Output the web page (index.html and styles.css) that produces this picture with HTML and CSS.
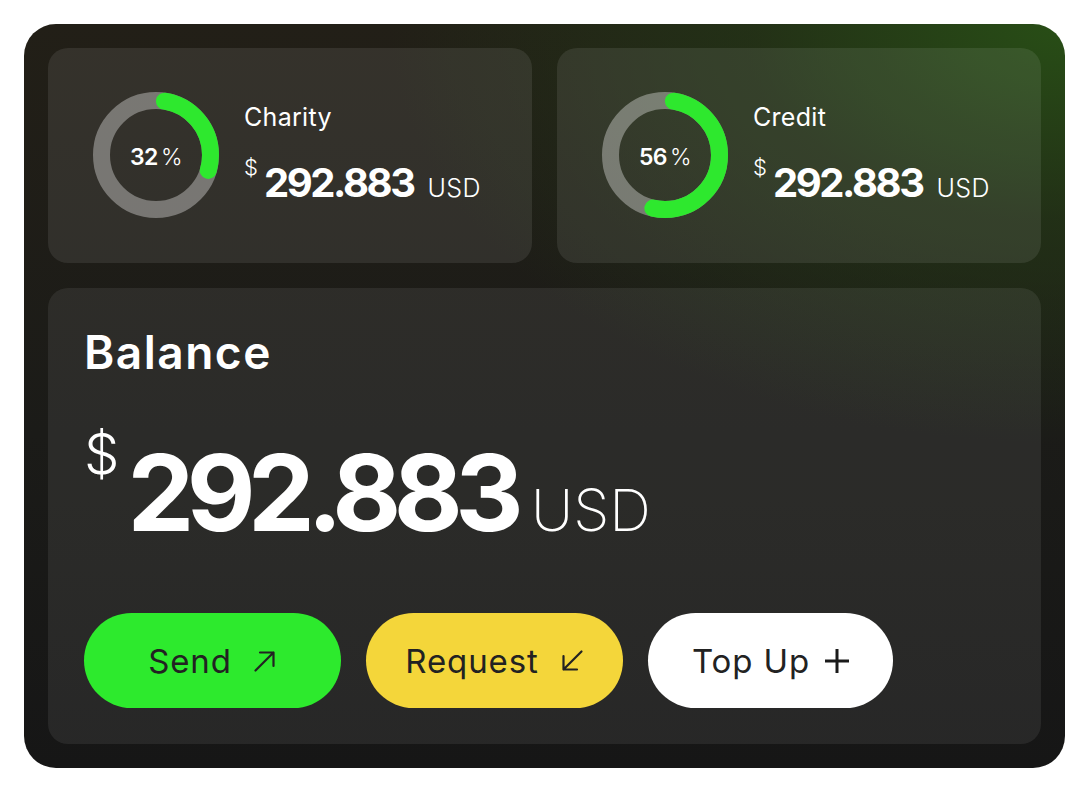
FILE: index.html
```html
<!DOCTYPE html>
<html>
<head>
<meta charset="utf-8">
<link rel="stylesheet" href="styles.css">
</head>
<body>
<div class="wallet">
  <div class="stats">
    <div class="stat">
      <div class="donut">
        <svg width="126" height="126" viewBox="0 0 126 126">
          <circle cx="63" cy="63" r="54.5" class="ring-bg"/>
          <circle cx="63" cy="63" r="54.5" class="ring-fg" stroke-dasharray="92.6 400" stroke-dashoffset="-8.5" transform="rotate(-90 63 63)"/>
        </svg>
        <div class="pct"><b>32</b><span>%</span></div>
      </div>
      <div class="stat-info">
        <div class="stat-label">Charity</div>
        <div class="stat-amount"><span class="cur">$</span><span class="num">292.883</span><span class="usd">USD</span></div>
      </div>
    </div>
    <div class="stat">
      <div class="donut">
        <svg width="126" height="126" viewBox="0 0 126 126">
          <circle cx="63" cy="63" r="54.5" class="ring-bg"/>
          <circle cx="63" cy="63" r="54.5" class="ring-fg" stroke-dasharray="174.7 400" stroke-dashoffset="-8.5" transform="rotate(-90 63 63)"/>
        </svg>
        <div class="pct"><b>56</b><span>%</span></div>
      </div>
      <div class="stat-info">
        <div class="stat-label">Credit</div>
        <div class="stat-amount"><span class="cur">$</span><span class="num">292.883</span><span class="usd">USD</span></div>
      </div>
    </div>
  </div>
  <div class="balance">
    <div class="balance-title">Balance</div>
    <div class="balance-amount"><span class="cur">$</span><span class="num">292.883</span><span class="usd">USD</span></div>
    <div class="actions">
      <button class="btn btn-send"><span>Send</span>
        <svg width="24" height="24" viewBox="0 0 24 24"><path d="M2.5 21.5 L20.5 3.5 M7 3.5 H20.5 V17" fill="none" stroke="#222" stroke-width="2.2" stroke-linecap="round" stroke-linejoin="round"/></svg>
      </button>
      <button class="btn btn-request"><span>Request</span>
        <svg width="24" height="24" viewBox="0 0 24 24"><path d="M21.5 2.5 L3.5 20.5 M3.5 7 V20.5 H17" fill="none" stroke="#222" stroke-width="2.2" stroke-linecap="round" stroke-linejoin="round"/></svg>
      </button>
      <button class="btn btn-top"><span>Top Up</span>
        <svg width="24" height="24" viewBox="0 0 24 24"><path d="M12 0 V24 M0 12 H24" fill="none" stroke="#1a1a1a" stroke-width="3"/></svg>
      </button>
    </div>
  </div>
</div>
</body>
</html>
```

FILE: styles.css
```css
* { box-sizing: border-box; }
html, body { margin: 0; padding: 0; background: #ffffff; }
body {
  font-family: "Inter", "Noto Sans", sans-serif;
  color: #ffffff;
  padding: 24px;
}
.wallet {
  width: 1041px;
  height: 744px;
  border-radius: 32px;
  padding: 24px;
  display: flex;
  flex-direction: column;
  gap: 25px;
  background:
    radial-gradient(ellipse 900px 560px at 100% 0%, rgba(40, 78, 22, 1) 0%, rgba(36, 60, 22, 0.6) 35%, rgba(30, 30, 24, 0) 75%),
    linear-gradient(180deg, #221f17 0%, #1b1b18 55%, #161616 100%);
}
.stats {
  display: grid;
  grid-template-columns: 1fr 1fr;
  gap: 25px;
  height: 215px;
}
.stat {
  background: rgba(255, 255, 255, 0.085);
  border-radius: 20px;
  display: flex;
  align-items: center;
  padding: 0 0 1px 45px;
  gap: 25px;
}
.donut {
  position: relative;
  width: 126px;
  height: 126px;
  flex: none;
}
.donut svg { display: block; }
.ring-bg { fill: none; stroke: rgba(255, 255, 255, 0.34); stroke-width: 17; }
.ring-fg { fill: none; stroke: #2ee82e; stroke-width: 17; stroke-linecap: round; }
.pct {
  position: absolute;
  inset: 0;
  display: flex;
  align-items: center;
  justify-content: center;
  gap: 3px;
  font-size: 23px;
  letter-spacing: -0.5px;
  padding-top: 3px;
}
.pct b { font-weight: 600; }
.pct span { font-weight: 300; }
.stat-info {
  display: flex;
  flex-direction: column;
  gap: 31px;
  padding-bottom: 6px;
}
.stat-label {
  font-size: 25px;
  font-weight: 400;
  line-height: 30px;
  letter-spacing: 0.3px;
}
.stat-amount {
  display: flex;
  align-items: baseline;
  line-height: 1;
}
.stat-amount .cur { align-self: flex-start; font-size: 22px; font-weight: 300; margin-top: -7px; margin-right: 6px; }
.stat-amount .num { font-size: 40px; font-weight: 700; letter-spacing: -2.4px; }
.stat-amount .usd { font-size: 25px; font-weight: 300; margin-left: 14px; letter-spacing: 0.3px; }

.balance {
  flex: 1;
  background: rgba(255, 255, 255, 0.075);
  border-radius: 20px;
  padding: 36px 38px 36px 36px;
  display: flex;
  flex-direction: column;
}
.balance-title {
  font-size: 46px;
  font-weight: 600;
  line-height: 56px;
  letter-spacing: 1.5px;
}
.balance-amount {
  display: flex;
  align-items: baseline;
  line-height: 1;
  margin-top: 60px;
}
.balance-amount .cur { align-self: flex-start; font-size: 56px; font-weight: 300; margin-right: 8px; margin-top: -14px; }
.balance-amount .num { font-size: 106px; font-weight: 700; letter-spacing: -7.5px; }
.balance-amount .usd { font-size: 58px; font-weight: 200; margin-left: 15px; }

.actions {
  margin-top: auto;
  display: flex;
  gap: 25px;
}
.btn {
  height: 95px;
  border: none;
  border-radius: 48px;
  display: flex;
  align-items: center;
  justify-content: center;
  gap: 21px;
  font-family: "Inter", "Noto Sans", sans-serif;
  font-size: 33px;
  font-weight: 400;
  letter-spacing: 0.9px;
  color: #222222;
  padding: 0;
}
.btn svg { display: block; }
.btn-send { width: 257px; background: #2dea2d; }
.btn-request { width: 257px; background: #f4d63a; }
.btn-top { width: 245px; background: #ffffff; gap: 15px; }
```
